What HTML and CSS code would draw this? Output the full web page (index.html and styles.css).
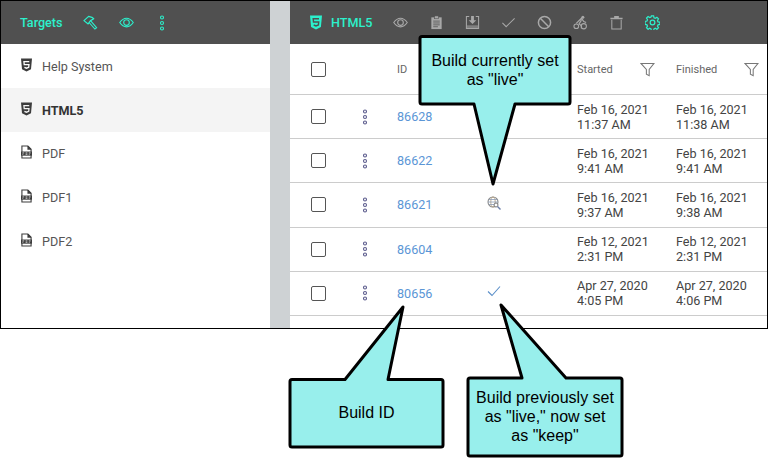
FILE: index.html
```html
<!DOCTYPE html>
<html>
<head>
  <meta charset="utf-8">
  <title>Targets - Builds</title>
  <link rel="stylesheet" href="styles.css">
</head>
<body>
  <svg class="defs" width="0" height="0">
    <symbol id="i-html5" viewBox="2 1 12 14">
      <path d="M2 1h12l-1.100 11.500L8 15l-4.900-2.500z" fill="currentColor"/>
      <path d="M11 4.200H5.200l.3 3.300h5.200l-.3 3L8 11.500l-2.300-1" fill="none" stroke="var(--knock)" stroke-width="1.400"/>
    </symbol>
    <symbol id="i-pdf" viewBox="2 1 12 14">
      <path d="M3 14.500v-13h6.500l3.500 3.500v9.500z" fill="none" stroke="currentColor" stroke-width="1.200"/>
      <path d="M9 1.500h1l3 3v1H9z" fill="currentColor"/>
      <rect x="2" y="7.500" width="12" height="4.500" fill="currentColor"/>
      <path d="M3.500 9h2M7 9h2M10.500 9h2M3.500 10.500h1M7 10.500h2M10.500 10.500h1" stroke="#fff" stroke-width=".8"/>
    </symbol>
    <symbol id="i-eye" viewBox="0 0 16 16">
      <path d="M.8 8C3 4.800 5.400 3.400 8 3.400s5 1.400 7.200 4.600C13 11.200 10.600 12.600 8 12.600S3 11.200.8 8z" fill="none" stroke="currentColor" stroke-width="1.200"/>
      <circle cx="8" cy="8" r="3" fill="none" stroke="currentColor" stroke-width="1.200"/>
    </symbol>
    <symbol id="i-kebab" viewBox="0 0 6 16">
      <circle cx="3" cy="2.500" r="1.500" fill="none" stroke="currentColor" stroke-width="1.100"/>
      <circle cx="3" cy="8" r="1.500" fill="none" stroke="currentColor" stroke-width="1.100"/>
      <circle cx="3" cy="13.500" r="1.500" fill="none" stroke="currentColor" stroke-width="1.100"/>
    </symbol>
    <symbol id="i-funnel" viewBox="0 0 16 16">
      <path d="M1 1.500h14L9.800 8v6.500l-3-1.500V8z" fill="none" stroke="currentColor" stroke-width="1.100"/>
    </symbol>
  </svg>

  <div class="app">
    <aside class="targets">
      <header class="bar targets-bar">
        <span class="bar-title">Targets</span>
        <svg class="icon hammer" viewBox="0 0 16 16">
          <path d="M1 6L6 1.500l3.500 1L11.500 4 8 6 5.500 9.500z" fill="none" stroke="currentColor" stroke-width="1.300" stroke-linejoin="round"/>
          <path d="M8 6l6.500 7.500-1.800 1.500L6.500 8" fill="none" stroke="currentColor" stroke-width="1.200"/>
        </svg>
        <svg class="icon eye-t"><use href="#i-eye"/></svg>
        <svg class="kebab-t"><use href="#i-kebab"/></svg>
      </header>
      <ul class="target-list">
        <li><svg class="t-icon"><use href="#i-html5"/></svg>Help System</li>
        <li class="selected"><svg class="t-icon"><use href="#i-html5"/></svg>HTML5</li>
        <li><svg class="t-icon"><use href="#i-pdf"/></svg>PDF</li>
        <li><svg class="t-icon"><use href="#i-pdf"/></svg>PDF1</li>
        <li><svg class="t-icon"><use href="#i-pdf"/></svg>PDF2</li>
      </ul>
    </aside>

    <div class="splitter"></div>

    <main class="builds">
      <header class="bar builds-bar">
        <svg class="title-icon"><use href="#i-html5"/></svg>
        <span class="bar-title">HTML5</span>
        <div class="tools">
          <svg class="tool" viewBox="0 0 16 16"><use href="#i-eye"/></svg>
          <svg class="tool" viewBox="0 0 16 16">
            <path d="M2.500 2.500h11V15h-11z" fill="currentColor"/>
            <rect x="6" y="1" width="4" height="3" fill="currentColor" stroke="#505050" stroke-width=".6"/>
            <path d="M4.500 6.500h7M4.500 8.500h7M4.500 10.500h7M4.500 12.500h5" stroke="#505050" stroke-width=".8"/>
          </svg>
          <svg class="tool" viewBox="0 0 16 16">
            <path d="M4.500 1.500H1.500v13h13v-13h-3" fill="none" stroke="currentColor" stroke-width="1.100"/>
            <path d="M6.500 1h3v4.500H12L8 9.500 4 5.500h2.500z" fill="currentColor"/>
            <path d="M2 11h12v3.500H2z" fill="currentColor" opacity=".55"/>
          </svg>
          <svg class="tool" viewBox="0 0 16 16"><path d="M1.500 8.500l4 4L14.500 3.500" fill="none" stroke="currentColor" stroke-width="1.100"/></svg>
          <svg class="tool" viewBox="0 0 16 16">
            <circle cx="8" cy="8" r="6.500" fill="none" stroke="currentColor" stroke-width="1.600"/>
            <path d="M3.500 3.500l9 9" stroke="currentColor" stroke-width="1.600"/>
          </svg>
          <svg class="tool" viewBox="0 0 16 16">
            <circle cx="3.500" cy="12" r="2.500" fill="none" stroke="currentColor" stroke-width="1.100"/>
            <circle cx="11.500" cy="12" r="2.800" fill="none" stroke="currentColor" stroke-width="1.100"/>
            <circle cx="10.500" cy="2.500" r="1.600" fill="currentColor"/>
            <path d="M3.500 9L9 3.500l2.500 3.500 2.500 1M9 5.500L6.500 9.500l2.500 2v3" fill="none" stroke="currentColor" stroke-width="1.300"/>
          </svg>
          <svg class="tool" viewBox="0 0 16 16">
            <path d="M1.500 3h13v1.400h-13zM5.500 3V1h5v2" fill="currentColor"/>
            <path d="M3 5v10h10V5" fill="none" stroke="currentColor" stroke-width="1.100"/>
          </svg>
          <svg class="tool tool-on" viewBox="0 0 16 16">
            <path d="M6.800 1h2.400l.4 2 1.400.6 1.700-1.100 1.700 1.700-1.100 1.700.6 1.400 2 .4v2.400l-2 .4-.6 1.400 1.100 1.700-1.700 1.700-1.700-1.100-1.400.6-.4 2H6.800l-.4-2-1.400-.6-1.700 1.100-1.700-1.700 1.100-1.700-.6-1.400-2-.4V6.800l2-.4.600-1.400-1.100-1.700 1.700-1.700 1.700 1.100 1.400-.6z" fill="none" stroke="currentColor" stroke-width="1.300"/>
            <circle cx="8" cy="8" r="2.500" fill="none" stroke="currentColor" stroke-width="1.300"/>
          </svg>
        </div>
      </header>

      <div class="row head-row">
        <span class="box"></span>
        <span></span>
        <span>ID</span>
        <span></span>
        <span class="head-cell">Started<svg class="funnel"><use href="#i-funnel"/></svg></span>
        <span class="head-cell">Finished<svg class="funnel"><use href="#i-funnel"/></svg></span>
      </div>

      <div class="row">
        <span class="box"></span>
        <svg class="kebab"><use href="#i-kebab"/></svg>
        <a class="id">86628</a>
        <span></span>
        <span class="when">Feb 16, 2021<br>11:37 AM</span>
        <span class="when">Feb 16, 2021<br>11:38 AM</span>
      </div>
      <div class="row">
        <span class="box"></span>
        <svg class="kebab"><use href="#i-kebab"/></svg>
        <a class="id">86622</a>
        <span></span>
        <span class="when">Feb 16, 2021<br>9:41 AM</span>
        <span class="when">Feb 16, 2021<br>9:41 AM</span>
      </div>
      <div class="row">
        <span class="box"></span>
        <svg class="kebab"><use href="#i-kebab"/></svg>
        <a class="id">86621</a>
        <svg class="state live" viewBox="0 0 14 14">
          <circle cx="6" cy="6" r="5" fill="none" stroke="#8a8a8a" stroke-width="1.100"/>
          <ellipse cx="6" cy="6" rx="2.200" ry="5" fill="none" stroke="#b09a78" stroke-width=".8"/>
          <path d="M1 6h10M2 3.500h8M2 8.500h8" stroke="#8c9cb5" stroke-width=".8"/>
          <circle cx="9" cy="9" r="2" fill="#fff" stroke="#777" stroke-width="1"/>
          <path d="M10.500 10.500l3 3" stroke="#6d7fa8" stroke-width="1.400"/>
        </svg>
        <span class="when">Feb 16, 2021<br>9:37 AM</span>
        <span class="when">Feb 16, 2021<br>9:38 AM</span>
      </div>
      <div class="row">
        <span class="box"></span>
        <svg class="kebab"><use href="#i-kebab"/></svg>
        <a class="id">86604</a>
        <span></span>
        <span class="when">Feb 12, 2021<br>2:31 PM</span>
        <span class="when">Feb 12, 2021<br>2:31 PM</span>
      </div>
      <div class="row">
        <span class="box"></span>
        <svg class="kebab"><use href="#i-kebab"/></svg>
        <a class="id">80656</a>
        <svg class="state keep" viewBox="0 0 14 12"><path d="M1 6.500l4 4 8-9" fill="none" stroke="#5b8fc9" stroke-width="1.100"/></svg>
        <span class="when">Apr 27, 2020<br>4:05 PM</span>
        <span class="when">Apr 27, 2020<br>4:06 PM</span>
      </div>
    </main>
  </div>

  <!-- callouts drawn over the screenshot -->
  <svg class="callouts" width="768" height="466" viewBox="0 0 768 466">
    <path d="M422 36.500H568q2 0 2 2V102q0 2-2 2H515L493 184 474 104H422q-2 0-2-2V38.500q0-2 2-2z"/>
    <path d="M292 379.500H345L403 307 388 379.500H441q2 0 2 2V445q0 2-2 2H292q-2 0-2-2V381.500q0-2 2-2z"/>
    <path d="M470 378H522L501 305 566 378H620q2 0 2 2V454q0 2-2 2H470q-2 0-2-2V380q0-2 2-2z"/>
  </svg>
  <div class="note note-live">Build currently set<br>as "live"</div>
  <div class="note note-id">Build ID</div>
  <div class="note note-keep">Build previously set<br>as "live," now set<br>as "keep"</div>
</body>
</html>
```

FILE: styles.css
```css
:root {
  --accent: #2cf0cc;
  --knock: #fff;
}
* {
  box-sizing: border-box;
}
body {
  margin: 0;
  width: 768px;
  height: 466px;
  overflow: hidden;
  background: #fff;
  font-family: Roboto, sans-serif;
  font-size: 12.6px;
  color: #444;
}
.defs {
  display: block;
}
.app {
  display: flex;
  height: 329px;
  border: 1px solid #000;
  overflow: hidden;
}
.bar {
  display: flex;
  align-items: center;
  height: 43px;
  background: #505050;
  color: var(--accent);
}
.bar-title {
  font-weight: 500;
}

/* left side */
.targets {
  width: 269px;
  flex: none;
}
.targets-bar {
  padding-left: 19px;
}
.icon {
  width: 15px;
  height: 15px;
  flex: none;
}
.hammer {
  margin-left: 20px;
}
.eye-t {
  margin-left: 21px;
}
.kebab-t {
  width: 6px;
  height: 16px;
  margin-left: 25px;
}
.target-list {
  list-style: none;
  margin: 0;
  padding: 0.4px 0 0;
}
.target-list li {
  display: flex;
  align-items: center;
  height: 43.8px;
  padding-left: 20px;
  color: #555;
}
.target-list .selected {
  background: #f4f4f4;
  color: #333;
  font-weight: 700;
  --knock: #f4f4f4;
}
.t-icon {
  width: 11px;
  height: 14px;
  margin-right: 10px;
  margin-top: -3px;
  color: #3c3c3c;
}

.splitter {
  width: 20px;
  flex: none;
  background: #ced2d4;
}

/* right side */
.builds {
  flex: 1;
  min-width: 0;
}
.builds-bar {
  padding-left: 20px;
  --knock: #505050;
}
.title-icon {
  width: 12px;
  height: 15px;
  margin-right: 9px;
}
.tools {
  display: flex;
  align-items: center;
  gap: 21px;
  margin-left: 21px;
  color: #a8a8a8;
}
.tool {
  width: 15px;
  height: 15px;
  flex: none;
}
.tool-on {
  color: var(--accent);
}
.row {
  display: grid;
  grid-template-columns: 44px 42px 80px 100px 99px 1fr;
  align-items: center;
  height: 44.2px;
  padding-left: 21px;
  border-bottom: 1px solid #ccc;
}
.head-row {
  height: 51px;
  font-size: 11px;
  color: #666;
}
.box {
  display: block;
  width: 15px;
  height: 15px;
  border: 1.5px solid #555;
  border-radius: 2px;
}
.kebab {
  width: 6px;
  height: 16px;
  margin-left: 7px;
  color: #5a5a8c;
}
.id {
  color: #5b96d6;
}
.when {
  line-height: 15px;
}
.head-cell {
  display: flex;
  align-items: center;
}
.funnel {
  width: 15px;
  height: 15px;
  margin-left: 27px;
  color: #777;
}
.state {
  margin-left: 10px;
}
.live {
  width: 14px;
  height: 14px;
  margin-top: -3px;
}
.keep {
  width: 14px;
  height: 12px;
  margin-top: -4px;
}

/* callouts */
.callouts {
  position: absolute;
  left: 0;
  top: 0;
}
.callouts path {
  fill: #98efec;
  stroke: #000;
  stroke-width: 3;
  stroke-linejoin: round;
}
.note {
  position: absolute;
  font-family: "Liberation Sans", Arial, sans-serif;
  font-size: 16px;
  line-height: 19px;
  color: #000;
  text-align: center;
}
.note-live {
  left: 420px;
  top: 51px;
  width: 150px;
}
.note-id {
  left: 290px;
  top: 403px;
  width: 153px;
}
.note-keep {
  left: 468px;
  top: 388px;
  width: 154px;
}
```
